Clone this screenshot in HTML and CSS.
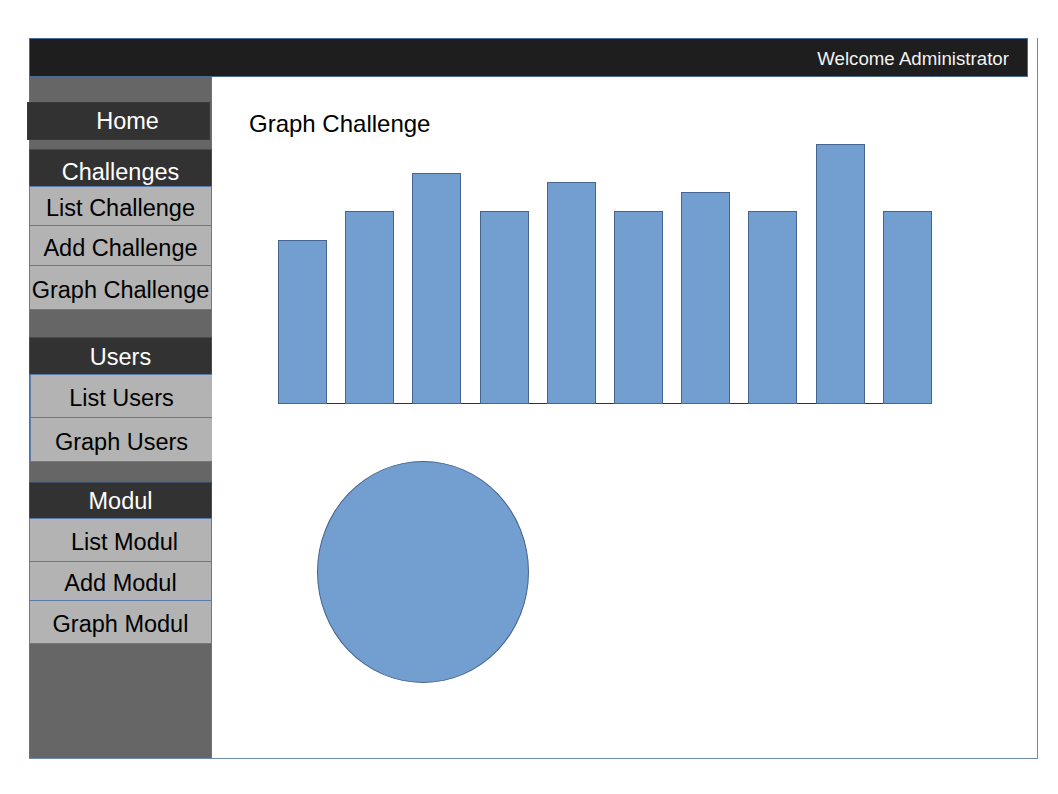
FILE: index.html
```html
<!DOCTYPE html>
<html>
<head>
<meta charset="utf-8">
<link rel="stylesheet" href="styles.css">
</head>
<body>
<div class="frame">
  <div class="topbar">Welcome Administrator</div>
  <div class="content">
    <nav class="sidebar">
      <div class="item dark home">Home</div>

      <div class="group g-challenges">
        <div class="item dark h38 low">Challenges</div>
        <div class="item light h39">List Challenge</div>
        <div class="item light h40">Add Challenge</div>
        <div class="item light h44">Graph Challenge</div>
      </div>

      <div class="group g-users">
        <div class="item dark h38">Users</div>
        <div class="item light h43 shift">List Users</div>
        <div class="item light h44 shift">Graph Users</div>
      </div>

      <div class="group g-modul">
        <div class="item dark h37">Modul</div>
        <div class="item light h43 pad-left">List Modul</div>
        <div class="item light h39">Add Modul</div>
        <div class="item light h43">Graph Modul</div>
      </div>
    </nav>

    <main class="main">
      <h1 class="title">Graph Challenge</h1>
      <div class="chart">
        <div class="bar" style="height:164px"></div>
        <div class="bar" style="height:193px"></div>
        <div class="bar" style="height:231px"></div>
        <div class="bar" style="height:193px"></div>
        <div class="bar" style="height:222px"></div>
        <div class="bar" style="height:193px"></div>
        <div class="bar" style="height:212px"></div>
        <div class="bar" style="height:193px"></div>
        <div class="bar" style="height:260px"></div>
        <div class="bar" style="height:193px"></div>
      </div>
      <div class="pie"></div>
    </main>
  </div>
</div>
</body>
</html>
```

FILE: styles.css
```css
* { box-sizing: border-box; }

html, body {
  margin: 0;
  padding: 0;
  background: #ffffff;
}

body {
  padding: 38px 0 0 29px;
  font-family: "Liberation Sans", Arial, sans-serif;
}

.frame {
  width: 1009px;
  height: 721px;
  display: flex;
  flex-direction: column;
  border-right: 1px solid #6f88bb;
  border-bottom: 1px solid #6f88bb;
}

.topbar {
  width: 999px;
  height: 39px;
  flex: none;
  background: #1e1e1e;
  border: 1px solid #4c6896;
  color: #f2f2f2;
  font-size: 18.7px;
  display: flex;
  align-items: center;
  justify-content: flex-end;
  padding-right: 18px;
  padding-top: 3px;
}

.content {
  flex: 1;
  display: flex;
  min-height: 0;
}

.sidebar {
  width: 183px;
  flex: none;
  background: #666666;
  border-left: 1px solid #5d7296;
  border-right: 1px solid #5d7296;
  display: flex;
  flex-direction: column;
  padding-top: 25px;
}

.group {
  display: flex;
  flex-direction: column;
}

.g-challenges { margin-top: 9px; }
.g-users { margin-top: 27px; }
.g-modul { margin-top: 20px; }

.item {
  width: 183px;
  margin-left: -1px;
  display: flex;
  align-items: center;
  justify-content: center;
  font-size: 23.5px;
  white-space: nowrap;
  border: 1px solid #4f6d9a;
}

.dark {
  background: #323232;
  color: #ffffff;
  border-color: #3c4d66;
  padding-top: 2px;
}

.light {
  background: #b3b3b3;
  color: #000000;
  border-color: #5a7bab;
  margin-top: -1px;
  padding-top: 5px;
}

.home {
  height: 38px;
  margin-left: -3px;
  padding-left: 18px;
  padding-top: 0;
  border-color: #3a3a3a;
}

.low { padding-top: 8px; }
.shift { margin-left: 0; }
.pad-left { padding-left: 8px; }

.h37 { height: 37px; }
.h38 { height: 38px; }
.h39 { height: 40px; }
.h40 { height: 41px; }
.h43 { height: 44px; }
.h44 { height: 45px; }

.main {
  flex: 1;
  background: #ffffff;
  padding-left: 37px;
  display: flex;
  flex-direction: column;
  align-items: flex-start;
}

.title {
  margin: 35px 0 0 0;
  font-size: 24px;
  font-weight: normal;
  line-height: 24px;
  color: #000000;
}

.chart {
  margin: 8px 0 0 29px;
  width: 654px;
  height: 260px;
  display: flex;
  align-items: flex-end;
  gap: 18.2px;
  border-bottom: 1px solid #333333;
}

.bar {
  width: 49px;
  flex: none;
  background: #729fcf;
  border: 1px solid #45648f;
  margin-bottom: -1px;
}

.pie {
  margin: 57px 0 0 68px;
  width: 212px;
  height: 222px;
  border-radius: 50%;
  background: #729fcf;
  border: 1px solid #45648f;
}
```
